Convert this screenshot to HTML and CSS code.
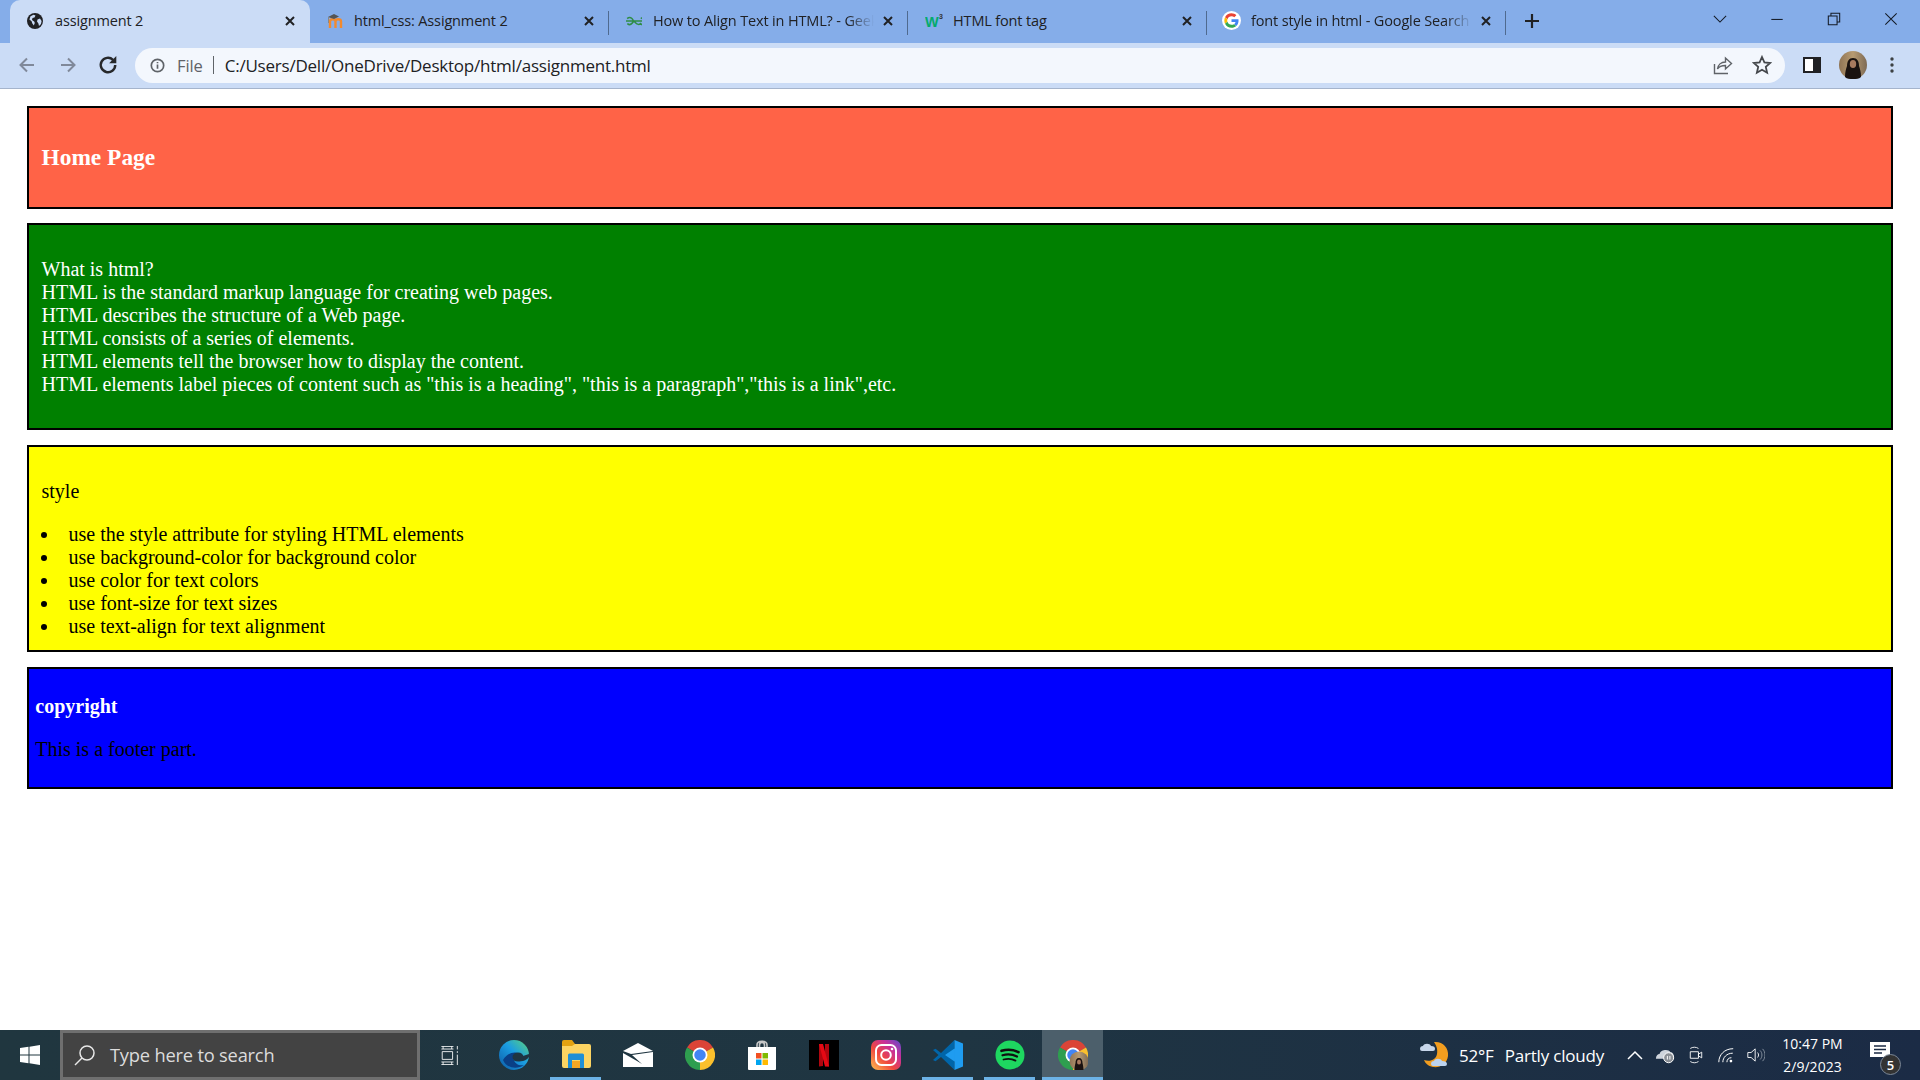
FILE: index.html
```html
<!DOCTYPE html>
<html lang="en">
<head>
<meta charset="utf-8">
<title>assignment 2</title>
<link rel="stylesheet" href="styles.css">
</head>
<body>
<svg class="defs" width="0" height="0" aria-hidden="true">
  <defs>
    <symbol id="chrome" viewBox="0 0 24 24">
      <path fill="#db4437" d="M12 12L1.6 6A12 12 0 0 1 22.4 6Z"/>
      <path fill="#fbc02d" d="M12 12L22.4 6A12 12 0 0 1 12 24Z"/>
      <path fill="#2e9e4f" d="M12 12L12 24A12 12 0 0 1 1.6 6Z"/>
      <circle cx="12" cy="12" r="6" fill="#fff"/>
      <circle cx="12" cy="12" r="4.6" fill="#4285f4"/>
    </symbol>
    <linearGradient id="ig" x1="0" y1="1" x2="1" y2="0">
      <stop offset="0" stop-color="#fdc14f"/><stop offset=".4" stop-color="#f0483e"/><stop offset=".7" stop-color="#c7309a"/><stop offset="1" stop-color="#5b4fd0"/>
    </linearGradient>
    <linearGradient id="av" x1="0" y1="0" x2="1" y2="0">
      <stop offset="0" stop-color="#8f7455"/><stop offset=".5" stop-color="#b79b72"/><stop offset="1" stop-color="#7d6a55"/>
    </linearGradient>
    <linearGradient id="edge" x1="0" y1="1" x2="1" y2="0">
      <stop offset="0" stop-color="#0c59a4"/><stop offset=".55" stop-color="#1b9de2"/><stop offset="1" stop-color="#5ed47a"/>
    </linearGradient>
  </defs>
</svg>

<header class="browser">
  <div class="tabstrip">
    <div class="tab tab-active">
      <svg class="fav" viewBox="0 0 16 16"><circle cx="8" cy="8" r="8" fill="#202124"/><path fill="#cbdcf6" d="M3.5 3.2l3-1.4 2 .6-1 2-2 .6-.5 2 2.2 1.4 .6 1.6-1 2.6-1.6-2.4-.6-2-2.2-1.6zM10.5 6.5l2.5-1 1.6 2.4-.6 3-2 2.2-.6-2.5-1.4-2.1z"/></svg>
      <span class="tab-title tab-title-first">assignment 2</span>
      <svg class="close" viewBox="0 0 12 12"><path d="M2 2l8 8M10 2l-8 8"/></svg>
    </div>
    <div class="tab">
      <svg class="fav" viewBox="0 0 16 16"><path fill="none" stroke="#f28a2e" stroke-width="2.4" d="M3 15V8.500c0-3 5.500-3 5.500 0V15M8.500 8.500c0-3 5.500-3 5.500 0V15"/><path fill="#555" d="M1 4L7 1l5 2.500L7 6z"/><path stroke="#888" d="M1.500 4v6" fill="none"/></svg>
      <span class="tab-title">html_css: Assignment 2</span>
      <svg class="close" viewBox="0 0 12 12"><path d="M2 2l8 8M10 2l-8 8"/></svg>
    </div>
    <div class="tab">
      <svg class="fav" viewBox="0 0 16 16"><path fill="none" stroke="#2f8d46" stroke-width="1.5" d="M0 8h16M1.2 5.6a3.4 3.4 0 1 1 .2 5c1.2 1 3.6 1.2 4.6-.4L8 8l2 2.2c1 1.6 3.4 1.4 4.6.4a3.4 3.4 0 1 0 .2-5"/></svg>
      <span class="tab-title tab-title-fade">How to Align Text in HTML? - GeeksforGeeks</span>
      <svg class="close" viewBox="0 0 12 12"><path d="M2 2l8 8M10 2l-8 8"/></svg>
    </div>
    <div class="tab">
      <svg class="fav fav-w3" viewBox="0 0 18 16"><text x="0" y="14" class="w3-w">W</text><text x="14" y="6" class="w3-3">3</text></svg>
      <span class="tab-title">HTML font tag</span>
      <svg class="close" viewBox="0 0 12 12"><path d="M2 2l8 8M10 2l-8 8"/></svg>
    </div>
    <div class="tab">
      <svg class="fav fav-g" viewBox="0 0 48 48"><circle cx="24" cy="24" r="24" fill="#fff"/><path fill="#ea4335" d="M24 13c2.900 0 5.200 1 7 2.700l5.200-5.200C33 7.600 28.900 5.800 24 5.800c-7.100 0-13.300 4.100-16.300 10.100l6 4.700C15.200 16.300 19.200 13 24 13z"/><path fill="#4285f4" d="M41.800 24.400c0-1.300-.1-2.500-.3-3.700H24v7h10.100c-.4 2.300-1.700 4.300-3.700 5.600l5.800 4.500c3.400-3.100 5.600-7.800 5.600-13.400z"/><path fill="#fbbc05" d="M13.700 27.400c-.4-1.100-.6-2.300-.6-3.400s.2-2.300.6-3.400l-6-4.700C6.500 18.400 5.800 21.100 5.800 24s.7 5.600 1.900 8.100z"/><path fill="#34a853" d="M24 42.200c4.900 0 9-1.600 12-4.400l-5.800-4.500c-1.600 1.100-3.700 1.700-6.200 1.700-4.800 0-8.800-3.200-10.300-7.600l-6 4.700c3 6 9.200 10.100 16.300 10.100z"/></svg>
      <span class="tab-title tab-title-fade">font style in html - Google Search</span>
      <svg class="close" viewBox="0 0 12 12"><path d="M2 2l8 8M10 2l-8 8"/></svg>
    </div>
    <svg class="newtab" viewBox="0 0 16 16"><path d="M8 1v14M1 8h14"/></svg>
    <div class="winctl">
      <svg class="win win-chev" viewBox="0 0 16 16"><path d="M1 4.500l7 7 7-7"/></svg>
      <svg class="win" viewBox="0 0 16 16"><path d="M1.500 8.500h13"/></svg>
      <svg class="win" viewBox="0 0 16 16"><path d="M1.500 4.500h10v10h-10zM4.500 4.500v-3h10v10h-3"/></svg>
      <svg class="win" viewBox="0 0 16 16"><path d="M1.500 1.500l13 13M14.500 1.500l-13 13"/></svg>
    </div>
  </div>
  <div class="toolbar">
    <svg class="nav nav-off" viewBox="0 0 18 18"><path d="M16 9H3M9 2.500L2.500 9 9 15.500"/></svg>
    <svg class="nav nav-off" viewBox="0 0 18 18"><path d="M2 9h13M9 2.500L15.500 9 9 15.500"/></svg>
    <svg class="nav nav-reload" viewBox="0 0 18 18"><path d="M15.500 9a6.500 6.500 0 1 1-2-4.700"/><path class="nav-fill" d="M16.500 1v6.500H10z"/></svg>
    <div class="omnibox">
      <svg class="info" viewBox="0 0 16 16"><circle cx="8" cy="8" r="6.600"/><path d="M8 7v4.500M8 4.200v1.500"/></svg>
      <span class="scheme">File</span>
      <span class="divider"></span>
      <span class="url">C:/Users/Dell/OneDrive/Desktop/html/assignment.html</span>
      <svg class="omni-ic omni-share" viewBox="0 0 20 20"><path d="M1.500 9v9.500h13.500M4.500 14c.5-4 3.500-7 8-7V3l6 5.500-6 5.500v-3.500c-4 0-6.500 1-8 3.500z"/></svg>
      <svg class="omni-ic omni-star" viewBox="0 0 20 20"><path d="M10 2l2.400 5.400 5.800.6-4.400 3.900 1.300 5.800L10 14.700l-5.100 3 1.300-5.800L1.800 8l5.800-.6z"/></svg>
    </div>
    <div class="tb-right">
      <svg class="panel" viewBox="0 0 18 16"><path fill="#202124" d="M0 0h18v16H0z"/><path fill="#fff" d="M2 2h8v12H2z"/></svg>
      <svg class="avatar" viewBox="0 0 28 28"><circle cx="14" cy="14" r="14" fill="url(#av)"/><path fill="#1a1210" d="M6 26c0-5 1-8 2-11 0-5 2-8 6-8s6 3 6 8c1 3 2 6 2 11-2 2-5 2-8 2s-6 0-8-2z"/><ellipse cx="14" cy="13" rx="3.200" ry="4" fill="#a87a5e"/></svg>
      <svg class="kebab" viewBox="0 0 4 16"><circle cx="2" cy="2" r="1.700"/><circle cx="2" cy="8" r="1.700"/><circle cx="2" cy="14" r="1.700"/></svg>
    </div>
  </div>
</header>

<main class="page">
  <section class="box box-home">
    <h3 class="home-title">Home Page</h3>
  </section>
  <section class="box box-about">
    <p class="para">What is html?<br>HTML is the standard markup language for creating web pages.<br>HTML describes the structure of a Web page.<br>HTML consists of a series of elements.<br>HTML elements tell the browser how to display the content.<br>HTML elements label pieces of content such as "this is a heading", "this is a paragraph","this is a link",etc.</p>
  </section>
  <section class="box box-style">
    <p class="para">style</p>
    <ul class="style-list">
      <li>use the style attribute for styling HTML elements</li>
      <li>use background-color for background color</li>
      <li>use color for text colors</li>
      <li>use font-size for text sizes</li>
      <li>use text-align for text alignment</li>
    </ul>
  </section>
  <footer class="box box-foot">
    <h4 class="foot-title">copyright</h4>
    <p class="foot-text">This is a footer part.</p>
  </footer>
</main>

<footer class="taskbar">
  <div class="start">
    <svg class="winlogo" viewBox="0 0 20 20"><path fill="#fff" d="M0 3l8.500-1.200v7.700H0zM9.500 1.700L20 0v9.500H9.500zM0 10.500h8.500v7.700L0 17zM9.500 10.500H20V20L9.500 18.300z"/></svg>
  </div>
  <div class="search">
    <svg class="search-ic" viewBox="0 0 22 22"><circle cx="13" cy="9" r="7"/><path d="M8 14l-7 7"/></svg>
    <span class="search-text">Type here to search</span>
  </div>
  <div class="tb-item tb-taskview">
    <svg class="ic-task" viewBox="0 0 20 22"><path d="M0 .5h14M12 .5v3M2 .5v3M0 3.500h14M1 6.500h12v9H1zM0 18.500h14M0 21.500h14M2 18.500v3M12 18.500v3M18.500 0v4M18.500 6v2M18.500 10v12"/></svg>
  </div>
  <div class="tb-item">
    <svg class="ic" viewBox="0 0 30 30"><circle cx="15" cy="15" r="15" fill="url(#edge)"/><path fill="#0a3f86" d="M4 20c3 8 14 10 21 5-5 1-9-1-10-5-1-3 1-6 4-7-5-2-11 1-15 7z"/><ellipse cx="19" cy="17" rx="5.500" ry="4.500" fill="#1f3542"/><path fill="#1f3542" d="M19 21c4 1 8 0 11-4v-3l-6 2z"/></svg>
  </div>
  <div class="tb-item tb-open">
    <svg class="ic ic-folder" viewBox="0 0 30 28"><path fill="#e3a211" d="M1 2a2 2 0 0 1 2-2h8l3 4v4H1z"/><path fill="#fcd462" d="M1 6l10 0 3-2h14a2 2 0 0 1 2 2v20a2 2 0 0 1-2 2H3a2 2 0 0 1-2-2z"/><path fill="#1f8fd6" d="M7 28V15a1.500 1.500 0 0 1 1.500-1.500h13A1.500 1.500 0 0 1 23 15v13h-4v-8h-8v8z"/><path fill="#f5a623" d="M11 21h8v7h-8z"/></svg>
  </div>
  <div class="tb-item">
    <svg class="ic ic-mail" viewBox="0 0 30 24"><path fill="#fff" d="M0 8L15 0l15 8L8 11zM0 10l14 8 5 3-10-9 21-3v15H0z"/></svg>
  </div>
  <div class="tb-item">
    <svg class="ic"><use href="#chrome"/></svg>
  </div>
  <div class="tb-item">
    <svg class="ic" viewBox="0 0 30 30"><path fill="none" stroke="#c8c8c8" stroke-width="1.600" d="M10 8V5c0-5 10-5 10 0v3M12.500 8V5c0-3.500 5-3.500 5 0v3"/><path fill="#fff" d="M1 7h28v22a1 1 0 0 1-1 1H2a1 1 0 0 1-1-1z"/><path fill="#f25022" d="M9 13h5.500v5.500H9z"/><path fill="#7fba00" d="M15.500 13H21v5.500h-5.500z"/><path fill="#00a4ef" d="M9 19.500h5.500V25H9z"/><path fill="#ffb900" d="M15.500 19.500H21V25h-5.500z"/></svg>
  </div>
  <div class="tb-item">
    <svg class="ic" viewBox="0 0 30 30"><path fill="#000" d="M0 0h30v30H0z"/><path fill="#b1060f" d="M10 4h4v22l-4 .5zM16 4h4v22.500l-4-.5z"/><path fill="#e50914" d="M10 4h4l6 22.500h-4z"/></svg>
  </div>
  <div class="tb-item">
    <svg class="ic" viewBox="0 0 30 30"><rect width="30" height="30" rx="7" fill="url(#ig)"/><rect x="5" y="5" width="20" height="20" rx="5.500" fill="none" stroke="#fff" stroke-width="2"/><circle cx="15" cy="15" r="4.800" fill="none" stroke="#fff" stroke-width="2"/><circle cx="21" cy="9" r="1.300" fill="#fff"/></svg>
  </div>
  <div class="tb-item tb-open">
    <svg class="ic" viewBox="0 0 30 30"><path fill="#0065a9" d="M21.500 0L8 13 2.500 8.800 0 10l5.500 5L0 20l2.500 1.200L8 17l13.500 13z"/><path fill="#1f9cf0" d="M21.500 0L30 3.500v23L21.500 30zM21.500 8.500L12 15l9.500 6.500z"/></svg>
  </div>
  <div class="tb-item tb-open">
    <svg class="ic" viewBox="0 0 30 30"><circle cx="15" cy="15" r="14.500" fill="#1ed760"/><path fill="none" stroke="#101010" stroke-linecap="round" stroke-width="2.600" d="M6.500 10.800c6-1.800 12-1.300 17 1.400"/><path fill="none" stroke="#101010" stroke-linecap="round" stroke-width="2.200" d="M7.500 15.300c5-1.400 10-1 14.500 1.300"/><path fill="none" stroke="#101010" stroke-linecap="round" stroke-width="1.800" d="M8.500 19.500c4-1 8.500-.8 12 1.100"/></svg>
  </div>
  <div class="tb-item tb-current">
    <svg class="ic" viewBox="0 0 30 30"><use href="#chrome" width="30" height="30"/><circle cx="21" cy="21" r="9.500" fill="url(#av)"/><path fill="#1a1210" d="M16.500 30c0-3 .5-5 1-7 0-3 1-5 3.500-5s3.500 2 3.500 5c.5 2 1 4 1 7z"/><ellipse cx="21" cy="22" rx="2" ry="2.600" fill="#a87a5e"/></svg>
  </div>
  <div class="tray">
    <svg class="weather" viewBox="0 0 30 30"><path fill="#f29d1f" d="M15 2c8-1 15 5 14 14-1 8-8 12-15 11-5-1-8-4-9-7 6 2 12 0 13-6 1-5-1-9-3-12z"/><path fill="#c7d6ea" d="M1 9a3 3 0 0 1 3-3c1-3 7-3 8 0 3 0 4 1 4 3a2 2 0 0 1-2 2H3a2 2 0 0 1-2-2z"/><path fill="#bcd3ee" d="M12 24a3 3 0 0 1 3-3c1-3 7-3 8 0 3 0 5 1 5 3a2 2 0 0 1-2 2H14a2 2 0 0 1-2-2z"/></svg>
    <span class="temp">52°F</span>
    <span class="cond">Partly cloudy</span>
    <svg class="tray-ic tray-first" viewBox="0 0 18 18"><path d="M2 13l7-7 7 7"/></svg>
    <svg class="tray-ic tray-cloud" viewBox="0 0 22 18"><path class="tray-fill" d="M1 13c0-3 2-5 4-5 1-5 10-6 12-2 3 0 4 3 4 7z"/><circle cx="15" cy="12" r="5.500" fill="#8a8f96"/><path d="M13.600 10v4M16.400 10v4" stroke="#fff"/></svg>
    <svg class="tray-ic" viewBox="0 0 20 22"><path d="M3 7h10v8H3zM13 10l4-2.500v7L13 12zM3 3c3-2 7-2 10 0M3 19c3 2 7 2 10 0"/></svg>
    <svg class="tray-ic" viewBox="0 0 20 18"><path d="M2 17C2 9 8 2 18 2M6.500 17c0-5 4-10 11-10M11 17c0-3 2-5 5-5"/><circle cx="15.500" cy="15.800" r="1.500" fill="#fff" stroke="none"/></svg>
    <svg class="tray-ic tray-sound" viewBox="0 0 22 18"><path d="M1 6h4l5-4.500v15L5 12H1zM13 6c1.500 2 1.500 4 0 6"/><path class="tray-dim" d="M16 3.500c3 3 3 8 0 11M19 1.500c4 4 4 11 0 15"/></svg>
    <div class="clock"><span>10:47 PM</span><span>2/9/2023</span></div>
    <div class="notify">
      <svg class="notify-ic" viewBox="0 0 20 18"><path fill="#fff" d="M0 0h20v15H0z"/><path stroke="#1b2a44" stroke-width="1.300" d="M4 4h12M4 7.500h12M4 11h8"/></svg>
      <span class="notify-badge">5</span>
    </div>
  </div>
</footer>
</body>
</html>
```

FILE: styles.css
```css
* { box-sizing: border-box; }

html, body { height: 100%; }

body {
  margin: 0;
  display: flex;
  flex-direction: column;
  height: 100vh;
  overflow: hidden;
  background: #fff;
  font-family: "Liberation Serif", "Times New Roman", serif;
}

.defs { position: absolute; }

/* Browser chrome */
.browser {
  flex: none;
  font-family: "Open Sans", "Noto Sans", sans-serif;
  color: #202124;
}

.tabstrip {
  height: 43px;
  display: flex;
  align-items: center;
  padding-left: 10px;
  background: #85ade9;
}

.tab {
  position: relative;
  width: 299px;
  height: 43px;
  flex: none;
  display: flex;
  align-items: center;
  padding: 0 14px 2px 17px;
}

.tab::after {
  content: "";
  position: absolute;
  right: 0;
  top: 11px;
  bottom: 8px;
  width: 1px;
  background: #4f6a8f;
}

.tab-active {
  width: 300px;
  background: #cbdcf6;
  border-radius: 10px 10px 0 0;
}

.tab-active::after { display: none; }

.fav {
  width: 16px;
  height: 16px;
  flex: none;
  margin-right: 11px;
}

.fav-w3 { width: 18px; margin-right: 10px; }
.fav-g { width: 19px; height: 19px; margin: 0 10px 0 -2px; }

.w3-w {
  font: bold 14.500px "Liberation Sans", sans-serif;
  fill: #04aa6d;
}

.w3-3 {
  font: bold 7px "Liberation Sans", sans-serif;
  fill: #333;
}

.tab-title {
  flex: 1;
  min-width: 0;
  white-space: nowrap;
  overflow: hidden;
  font-size: 14.500px;
  letter-spacing: -0.15px;
}

.tab-title-first { padding-left: 1px; }

.tab-title-fade {
  -webkit-mask-image: linear-gradient(to right, #000 88%, transparent 100%);
  mask-image: linear-gradient(to right, #000 88%, transparent 100%);
}

.close {
  width: 12px;
  height: 12px;
  flex: none;
  margin-left: 8px;
  fill: none;
  stroke: #202124;
  stroke-width: 2;
}

.newtab {
  width: 16px;
  height: 16px;
  flex: none;
  margin: -2px 0 0 18px;
  fill: none;
  stroke: #202124;
  stroke-width: 2.200;
}

.winctl {
  margin-left: auto;
  display: flex;
  align-items: center;
  align-self: flex-start;
  height: 38px;
  padding-right: 22px;
}

.win {
  width: 14px;
  height: 14px;
  margin-left: 43px;
  fill: none;
  stroke: #141b26;
  stroke-width: 1.200;
}

.toolbar {
  height: 46px;
  display: flex;
  align-items: center;
  padding: 0 0 1px 18px;
  background: #cbdcf6;
  border-bottom: 1px solid #a5b4cc;
}

.nav {
  width: 18px;
  height: 18px;
  flex: none;
  margin-right: 23px;
  fill: none;
  stroke: #3c4043;
  stroke-width: 2;
}

.nav-off { stroke: #80899a; }

.nav-reload {
  width: 20px;
  height: 20px;
  margin: 0 -1px 0 -2px;
  stroke: #26282b;
  stroke-width: 2.200;
}

.nav-fill { fill: #26282b; stroke: none; }

.omnibox {
  width: 1650px;
  height: 35px;
  margin-left: 18px;
  flex: none;
  display: flex;
  align-items: center;
  padding: 0 13px 0 15px;
  background: #f3f7fd;
  border-radius: 18px;
}

.info {
  width: 15px;
  height: 15px;
  flex: none;
  fill: none;
  stroke: #5f6368;
  stroke-width: 1.800;
}

.scheme {
  margin-left: 12px;
  color: #5f6368;
  font-size: 16.500px;
  letter-spacing: -0.1px;
}

.divider {
  width: 1px;
  height: 18px;
  margin: 0 11px 0 10px;
  background: #5f6368;
}

.url {
  flex: 1;
  font-size: 17px;
  letter-spacing: -0.225px;
}

.omni-ic {
  width: 20px;
  height: 20px;
  flex: none;
  fill: none;
  stroke: #5f6368;
  stroke-width: 1.400;
}

.omni-star { margin-left: 19px; stroke-width: 1.800; stroke: #45484c; }

.tb-right {
  display: flex;
  align-items: center;
  flex: none;
  margin-left: 18px;
}

.panel { width: 18px; height: 16px; }

.avatar { width: 28px; height: 28px; margin-left: 18px; }

.kebab { width: 4px; height: 16px; margin-left: 23px; fill: #3c4043; }

/* Page content */
.page {
  flex: 1;
  display: flex;
  flex-direction: column;
  gap: 14.600px;
  padding: 17px 27px 0;
  font-size: 20px;
}

.box {
  border: 2px solid #000;
  padding: 12.500px;
}

.box-home { background: tomato; color: #fff; }

.home-title {
  margin: 23.400px 0;
  font-size: 23.400px;
  line-height: 27px;
}

.box-about { background: green; color: #fff; }

.box-style {
  padding-top: 13.500px;
  padding-bottom: 11.500px;
  background: yellow;
  color: #000;
}

.para { margin: 20px 0; }

.style-list {
  margin: 0;
  padding-left: 27px;
  list-style: none;
}

.style-list li { position: relative; }

.style-list li::before {
  content: "";
  position: absolute;
  left: -28px;
  top: 8.500px;
  width: 6px;
  height: 6px;
  border-radius: 50%;
  background: #000;
}

.box-foot {
  background: blue;
  padding: 0 6.250px;
}

.foot-title {
  margin: 26.500px 0 20px;
  font-size: 20px;
  color: #fff;
}

.foot-text { margin: 0 0 25.500px; color: #000; }

/* Taskbar */
.taskbar {
  flex: none;
  height: 50px;
  display: flex;
  background: linear-gradient(to right, #20363f 0%, #1f3542 50%, #1b2b45 100%);
  font-family: "Open Sans", "Noto Sans", sans-serif;
  color: #fff;
}

.start {
  width: 60px;
  display: flex;
  align-items: center;
  justify-content: center;
  flex: none;
}

.winlogo { width: 20px; height: 20px; }

.search {
  width: 360px;
  flex: none;
  display: flex;
  align-items: center;
  padding-left: 11px;
  background: #434343;
  border: 3px solid #6f6f6f;
}

.search-ic {
  width: 22px;
  height: 22px;
  fill: none;
  stroke: #e8e8e8;
  stroke-width: 1.500;
}

.search-text {
  margin: -2px 0 0 14px;
  color: #dcdcdc;
  font-size: 18.300px;
  letter-spacing: -0.2px;
}

.tb-item {
  position: relative;
  width: 62px;
  flex: none;
  display: flex;
  align-items: center;
  justify-content: center;
}

.tb-taskview { width: 63px; padding-right: 4px; }

.tb-open::after {
  content: "";
  position: absolute;
  left: 5px;
  right: 6px;
  bottom: 0;
  height: 3px;
  background: #6cb2e6;
}

.tb-current { background: #4c5f6b; width: 61px; margin-left: 1px; }

.tb-current::after {
  content: "";
  position: absolute;
  left: 0;
  right: 0;
  bottom: 0;
  height: 3px;
  background: #6cb2e6;
}

.ic { width: 30px; height: 30px; }

.ic-mail { height: 24px; }

.ic-folder { margin-top: -3px; }

.ic-task {
  width: 20px;
  height: 19px;
  fill: none;
  stroke: #fff;
  stroke-width: 1;
}

.tray {
  margin-left: auto;
  display: flex;
  align-items: center;
  padding-right: 13px;
  box-shadow: inset -1px 0 0 #1b2b45;
}

.weather { width: 32px; height: 30px; margin-right: 9px; }

.temp, .cond { font-size: 17px; letter-spacing: -0.2px; }

.cond { margin-left: 11px; }

.tray-ic {
  width: 18px;
  height: 18px;
  margin-left: 12px;
  fill: none;
  stroke: #fff;
  stroke-width: 1.100;
}

.tray-first { margin-left: 22px; stroke-width: 1.500; }

.tray-cloud { width: 20px; height: 18px; margin-left: 11px; }

.tray-fill { fill: #cfd5dd; stroke: none; }

.tray-dim { stroke: #8d97a5; }

.clock {
  width: 75px;
  margin-left: 10px;
  display: flex;
  flex-direction: column;
  align-items: center;
  font-size: 14px;
  line-height: 23px;
}

.notify {
  position: relative;
  width: 50px;
  margin-left: 7px;
  height: 50px;
  display: flex;
  align-items: center;
  justify-content: center;
}

.notify-ic { width: 20px; height: 18px; margin: -8px 0 0 -4px; }

.notify-badge {
  position: absolute;
  left: 23px;
  top: 24px;
  width: 21px;
  height: 21px;
  display: flex;
  align-items: center;
  justify-content: center;
  border-radius: 50%;
  border: 1px solid #7b8797;
  background: #333;
  font-size: 13px;
  font-weight: 600;
}
```
